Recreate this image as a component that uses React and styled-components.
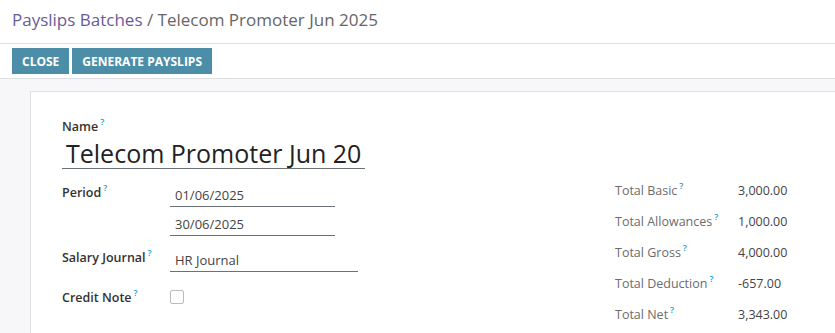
import React from 'react';
import styled, { createGlobalStyle } from 'styled-components';

const GlobalStyle = createGlobalStyle`
  html, body {
    margin: 0;
    padding: 0;
    background: #ffffff;
    font-family: "Open Sans", "Noto Sans", sans-serif;
    color: #333;
  }
`;

const Page = styled.div`
  width: 835px;
  height: 333px;
  overflow: hidden;
  display: flex;
  flex-direction: column;
`;

const Header = styled.div`
  flex-shrink: 0;
  height: 44px;
  box-sizing: border-box;
  border-bottom: 1px solid #dfe0e3;
  display: flex;
  align-items: center;
  padding: 0 12px 4px;
  font-size: 17px;
  color: #666;
`;

const Crumb = styled.span`
  color: #6b5b95;
`;

const Toolbar = styled.div`
  flex-shrink: 0;
  height: 35px;
  box-sizing: border-box;
  border-bottom: 1px solid #dfe0e3;
  display: flex;
  gap: 3px;
  padding: 4px 12px 0;
`;

const Button = styled.button`
  height: 26px;
  padding: 0 10px;
  border: none;
  border-radius: 0;
  background: #4c8ea7;
  color: #fff;
  font-family: inherit;
  font-size: 12px;
  font-weight: 700;
  text-transform: uppercase;
  cursor: pointer;
`;

const Body = styled.div`
  flex: 1;
  background: #f7f7f9;
  padding: 12px 0 0 30px;
`;

const Sheet = styled.div`
  height: 100%;
  box-sizing: border-box;
  background: #fff;
  border-top: 1px solid #dfe0e3;
  border-left: 1px solid #dfe0e3;
  padding: 26px 0 0 31px;
`;

const Label = styled.label`
  display: block;
  margin-top: ${p => p.offset || 0}px;
  font-size: 12.5px;
  line-height: 17px;
  font-weight: 600;
  color: #333;
`;

const Help = styled.sup`
  color: #1d9bc6;
  font-size: 9px;
  line-height: 0;
  font-weight: 600;
  margin-left: 2px;
  vertical-align: 6px;
`;

const TitleInput = styled.div`
  width: 303px;
  box-sizing: border-box;
  margin-top: 3px;
  padding: 0 0 0 4px;
  font-size: 25px;
  line-height: 30px;
  color: #222;
  border-bottom: 1px solid #6c7178;
`;

const Columns = styled.div`
  display: flex;
  margin-top: 14px;
`;

const LeftGroup = styled.div`
  width: 553px;
  display: flex;
  flex-direction: column;
`;

const FieldRow = styled.div`
  display: grid;
  grid-template-columns: 108px auto;
  align-items: start;
  margin-bottom: ${p => p.gap || 0}px;
`;

const Stack = styled.div`
  display: flex;
  flex-direction: column;
  gap: 5px;
`;

const Input = styled.div`
  width: ${p => p.w}px;
  height: 24px;
  box-sizing: border-box;
  padding: 1px 5px 0;
  font-size: 13px;
  line-height: 22px;
  color: #444;
  border-bottom: 1px solid #6c7178;
`;

const Check = styled.span`
  display: block;
  width: 12px;
  height: 12px;
  margin-top: 2px;
  border: 1px solid #bbb;
  border-radius: 2px;
`;

const RightGroup = styled.div`
  display: grid;
  grid-template-columns: 123px auto;
  grid-auto-rows: 31px;
  margin-top: -1px;
`;

const StatLabel = styled.span`
  font-size: 12.5px;
  line-height: 17px;
  color: #6c6c6c;
`;

const StatValue = styled.span`
  font-size: 12.5px;
  line-height: 17px;
  color: #444;
`;

const stats = [
  ['Total Basic', '3,000.00'],
  ['Total Allowances', '1,000.00'],
  ['Total Gross', '4,000.00'],
  ['Total Deduction', '-657.00'],
  ['Total Net', '3,343.00'],
];

export default function App() {
  return (
    <Page>
      <GlobalStyle />
      <Header>
        <Crumb>Payslips Batches</Crumb>&nbsp;/ Telecom Promoter Jun 2025
      </Header>
      <Toolbar>
        <Button>Close</Button>
        <Button>Generate Payslips</Button>
      </Toolbar>
      <Body>
        <Sheet>
          <Label>Name<Help>?</Help></Label>
          <TitleInput>Telecom Promoter Jun 20</TitleInput>
          <Columns>
            <LeftGroup>
              <FieldRow gap={12}>
                <Label offset={1}>Period<Help>?</Help></Label>
                <Stack>
                  <Input w={165}>01/06/2025</Input>
                  <Input w={165}>30/06/2025</Input>
                </Stack>
              </FieldRow>
              <FieldRow gap={16}>
                <Label offset={1}>Salary Journal<Help>?</Help></Label>
                <Input w={188}>HR Journal</Input>
              </FieldRow>
              <FieldRow>
                <Label offset={1}>Credit Note<Help>?</Help></Label>
                <Check />
              </FieldRow>
            </LeftGroup>
            <RightGroup>
              {stats.map(([label, value]) => (
                <React.Fragment key={label}>
                  <StatLabel>{label}<Help>?</Help></StatLabel>
                  <StatValue>{value}</StatValue>
                </React.Fragment>
              ))}
            </RightGroup>
          </Columns>
        </Sheet>
      </Body>
    </Page>
  );
}
